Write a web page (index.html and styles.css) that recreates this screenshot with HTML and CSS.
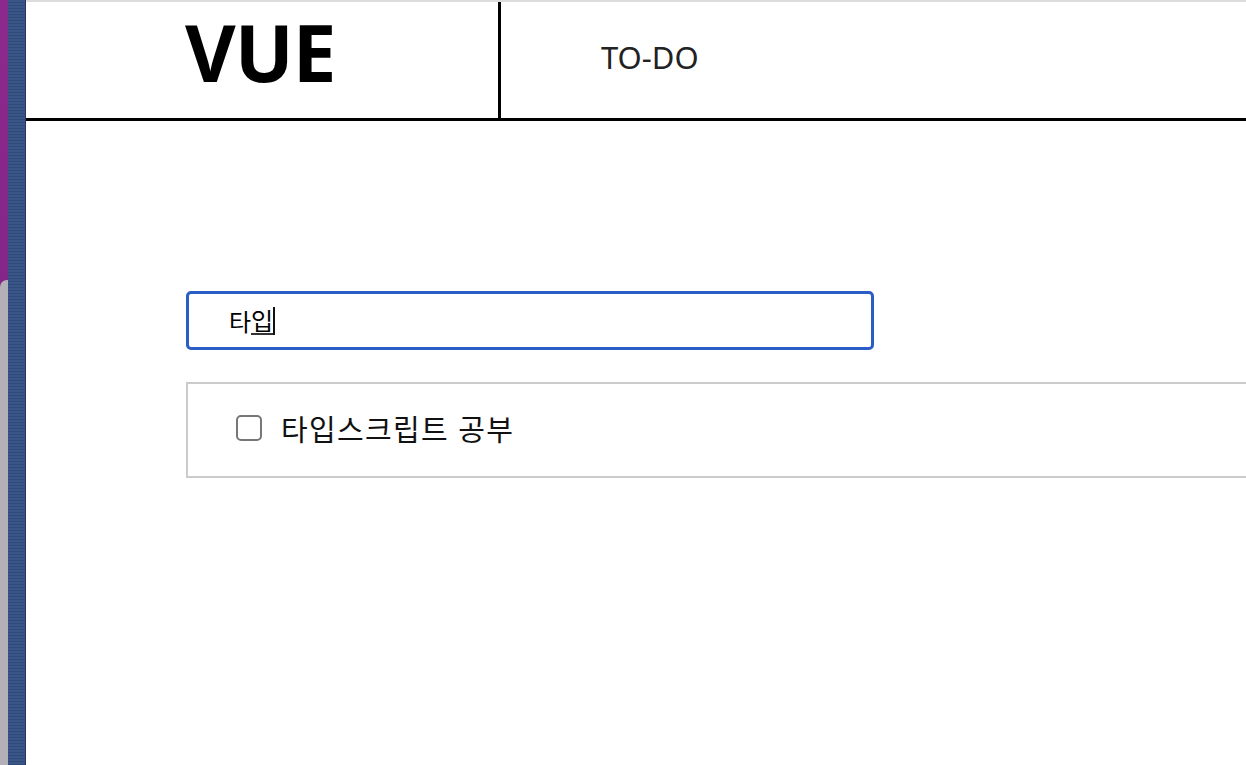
FILE: index.html
```html
<!DOCTYPE html>
<html lang="ko">
<head>
<meta charset="utf-8">
<title>VUE TO-DO</title>
<link rel="stylesheet" href="styles.css">
</head>
<body>
<div class="app">
  <div class="edge">
    <div class="edge-purple"><div class="edge-gray"></div></div>
    <div class="edge-blue"></div>
  </div>
  <div class="main">
    <header class="header">
      <div class="logo"><span class="logo-text">VUE</span></div>
      <nav class="nav"><span class="nav-item">TO-DO</span></nav>
    </header>
    <section class="content">
      <div class="search" role="textbox">타<span class="composing">입</span><span class="caret"></span></div>
      <ul class="todo-list">
        <li class="todo-item">
          <span class="checkbox"></span>
          <span class="todo-text">타입스크립트 공부</span>
        </li>
      </ul>
    </section>
  </div>
</div>
</body>
</html>
```

FILE: styles.css
```css
html, body {
  margin: 0;
  padding: 0;
  height: 100%;
  overflow: hidden;
  background: #ffffff;
}

.app {
  display: flex;
  height: 765px;
  width: 1246px;
  overflow: hidden;
}

.edge {
  display: flex;
  flex: 0 0 26px;
}

.edge-purple {
  flex: 0 0 8px;
  display: flex;
  flex-direction: column;
  justify-content: flex-end;
  background: linear-gradient(#8b2a8c, #7e2485 60%, #6a2280);
}

.edge-gray {
  height: 485px;
  background: #b3b0b8;
  border-top-left-radius: 7px;
}

.edge-blue {
  flex: 1;
  background: repeating-linear-gradient(#3a5688 0 2px, #304b7a 2px 3px);
  border-right: 1px solid #24385c;
}

.main {
  flex: 1;
  min-width: 0;
  border-top: 2px solid #dcdcdc;
  font-family: "Noto Sans", "Noto Sans CJK KR", sans-serif;
}

.header {
  display: flex;
  height: 116px;
  border-bottom: 3px solid #000;
}

.logo {
  flex: 0 0 475px;
  box-sizing: border-box;
  padding: 4px 0 0 159px;
  font-size: 78px;
  font-weight: 700;
  line-height: 1.2;
  color: #000;
  border-right: 3px solid #000;
  white-space: nowrap;
}

.logo-text {
  display: inline-block;
  letter-spacing: -1px;
}

.nav {
  padding: 40px 0 0 100px;
}

.nav-item {
  font-size: 31px;
  line-height: 1;
  color: #222;
}

.content {
  padding: 170px 0 0 160px;
}

.search {
  box-sizing: border-box;
  width: 688px;
  height: 59px;
  border: 3px solid #2a5ec6;
  border-radius: 5px;
  padding: 0 0 0 40px;
  display: flex;
  align-items: center;
  font-family: "Noto Sans CJK KR", sans-serif;
  font-size: 24px;
  color: #000;
}

.composing {
  border-bottom: 2px solid #333;
  line-height: 26px;
}

.caret {
  display: inline-block;
  width: 2px;
  height: 28px;
  background: #111;
}

.todo-list {
  list-style: none;
  margin: 32px 0 0 0;
  padding: 0;
}

.todo-item {
  box-sizing: border-box;
  width: 1200px;
  height: 96px;
  border: 2px solid #cbcbcb;
  display: flex;
  align-items: center;
  padding: 0 0 4px 48px;
}

.checkbox {
  box-sizing: border-box;
  flex: 0 0 26px;
  height: 26px;
  border: 2px solid #777;
  border-radius: 5px;
  background: #fff;
}

.todo-text {
  margin-left: 19px;
  font-family: "Noto Sans CJK KR", sans-serif;
  font-size: 29px;
  letter-spacing: 1.3px;
  color: #111;
  line-height: 1;
}
```
